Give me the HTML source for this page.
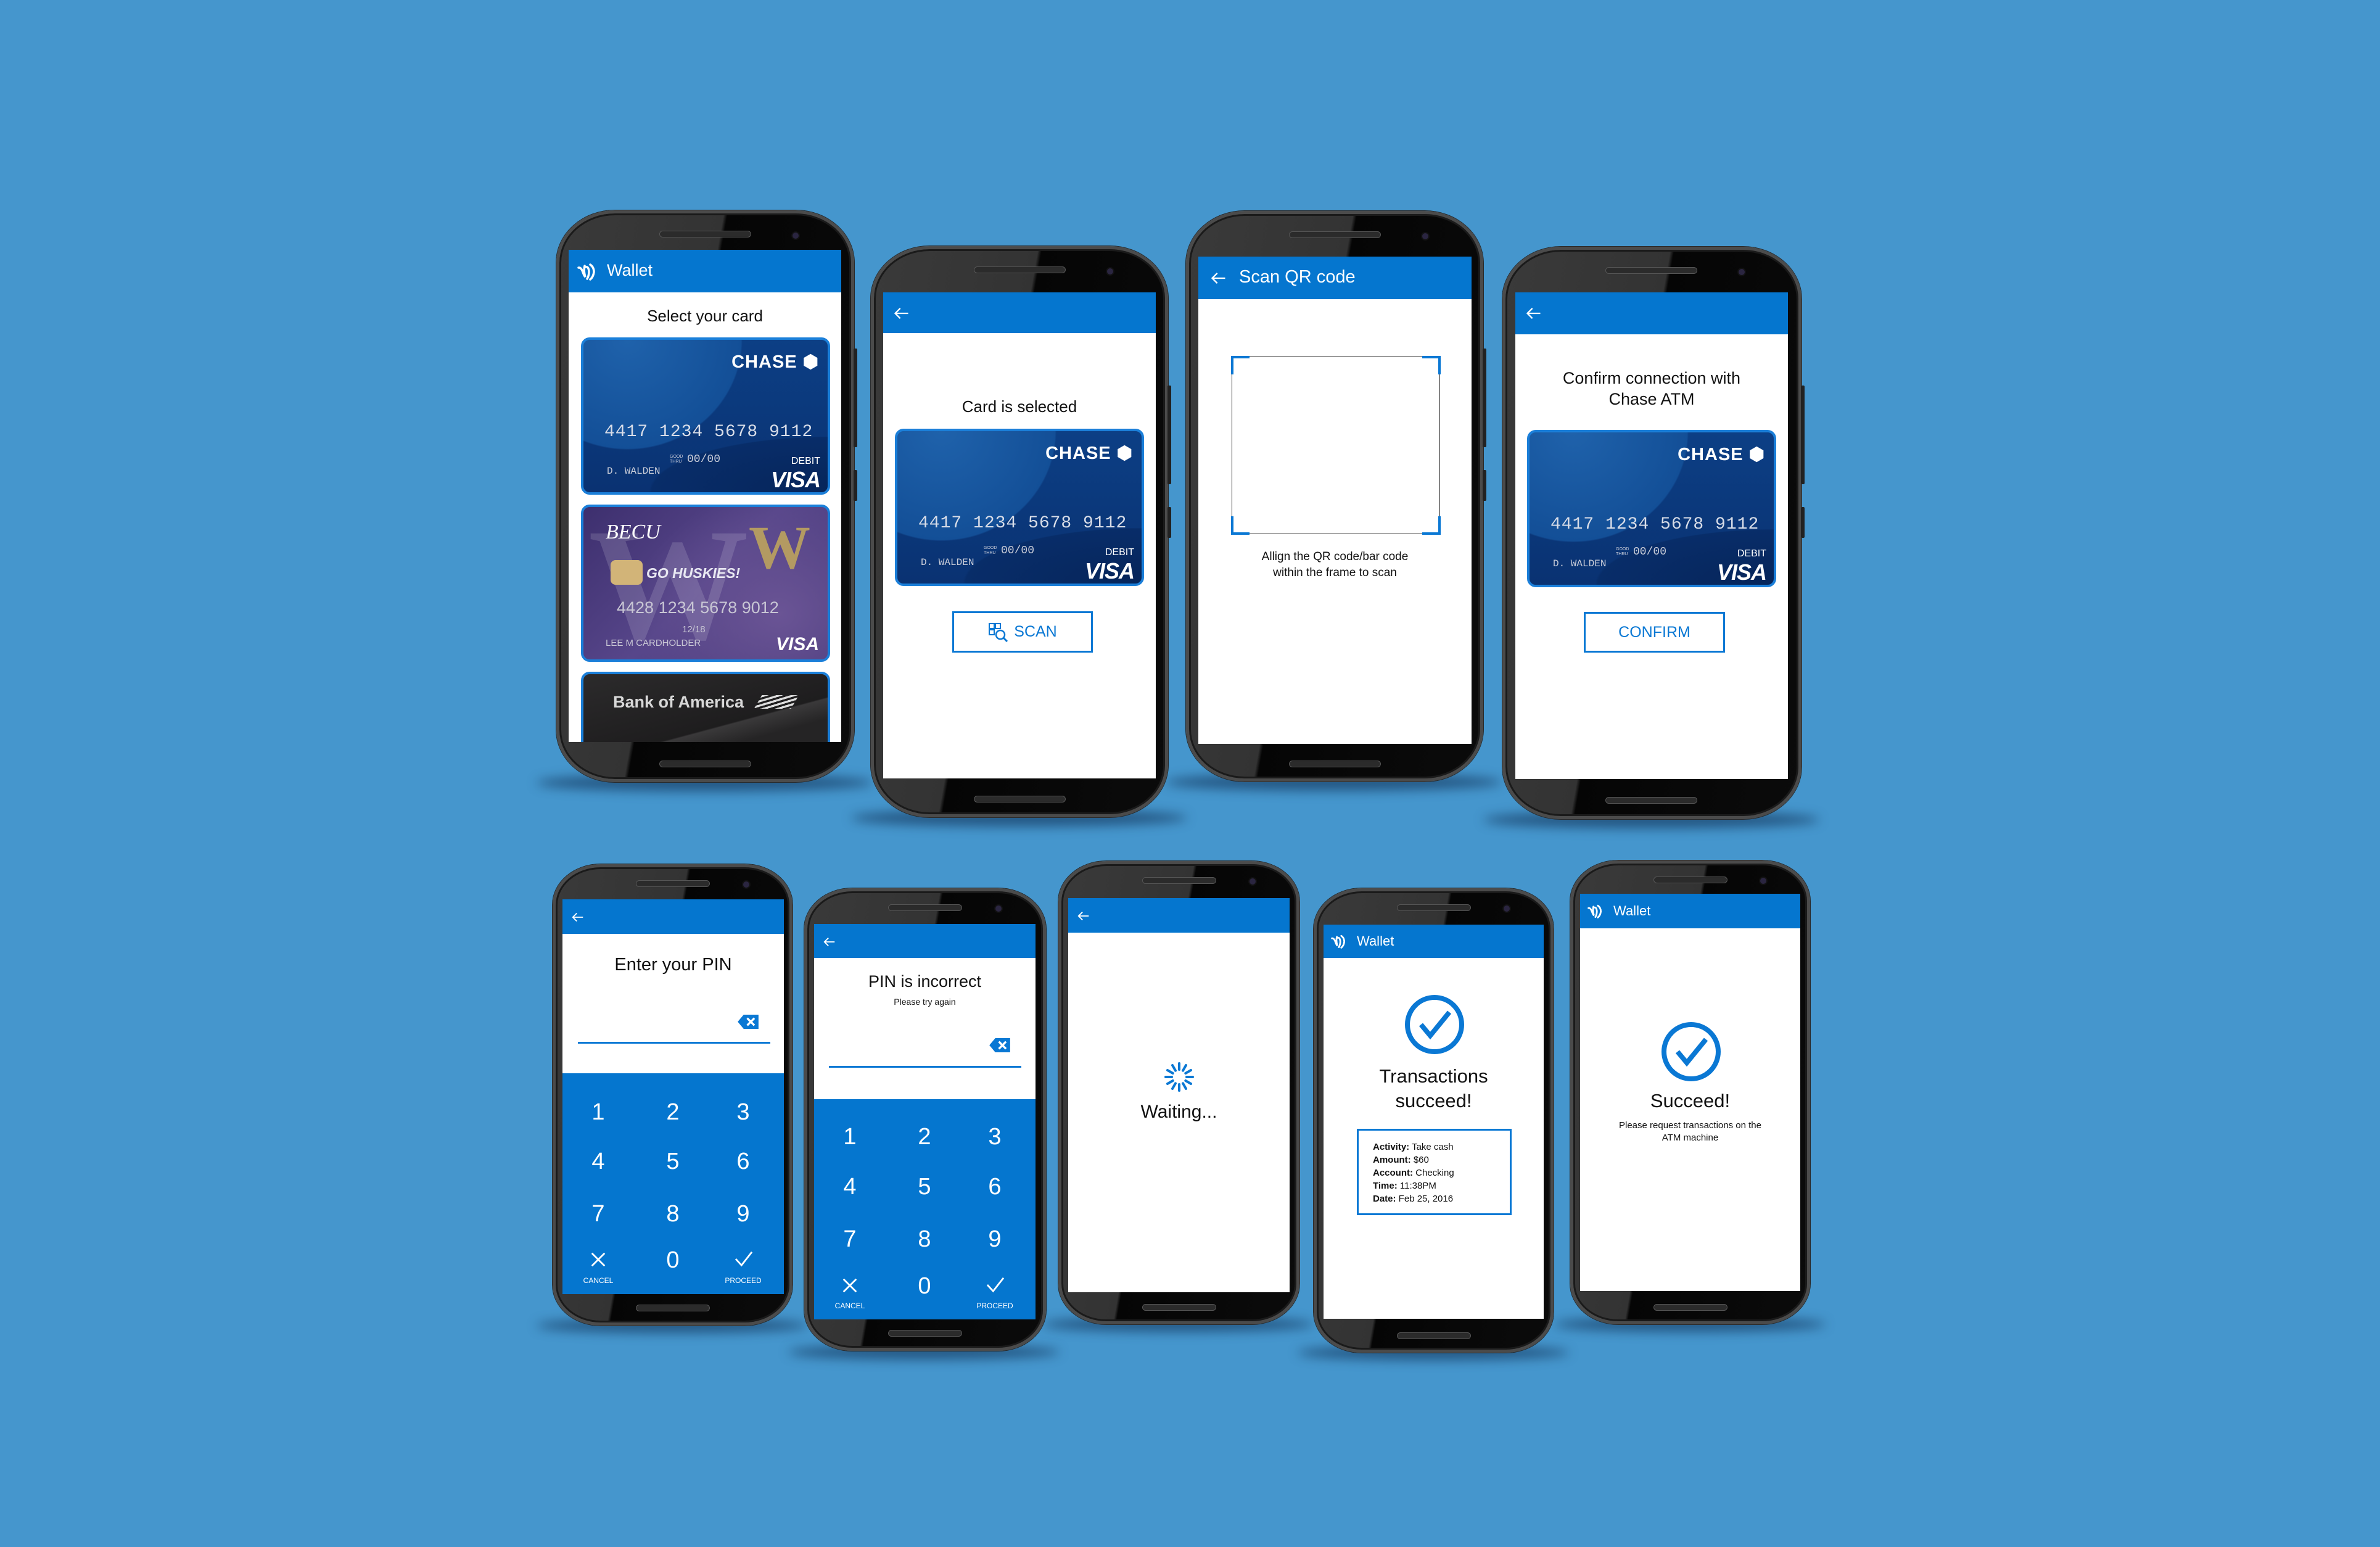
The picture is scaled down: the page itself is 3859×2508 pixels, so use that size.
<!DOCTYPE html>
<html><head><meta charset="utf-8">
<style>
*{margin:0;padding:0;box-sizing:border-box}
html,body{width:3859px;height:2508px;overflow:hidden;background:#4596cd;font-family:"Liberation Sans",sans-serif}
.ab{position:absolute}
.sh{position:absolute;background:rgba(10,35,70,.55);filter:blur(9px);border-radius:50%}
.bd{position:absolute;border-radius:95px/85px;border:5px solid #4b4b4b;
 background:linear-gradient(100deg,#3a3a3a 0%,#333 42%,#050505 43%,#0b0b0b 100%);
 box-shadow:inset 0 0 0 3px #1a1a1a, 0 0 0 1px #2a2a2a}
.sbd{border-radius:78px/66px}
.spk{position:absolute;height:11px;border-radius:6px;background:#2b2b2b;border:1px solid #555}
.cam{position:absolute;width:14px;height:14px;border-radius:50%;background:#2a2540;border:2px solid #111}
.btn{position:absolute;width:6px;background:#222;border-radius:2px}
.sc{position:absolute;background:#fff;overflow:hidden}
.bar{position:absolute;left:0;top:0;width:100%;background:#0576cf}
.nar{font-family:"Liberation Sans Narrow","Liberation Sans",sans-serif}
.t{position:absolute;left:0;width:100%;text-align:center;color:#111}
.card{position:absolute;width:404px;height:255px;border:4px solid #1b7fd9;border-radius:14px;overflow:hidden;
 background:radial-gradient(ellipse 62% 95% at 18% 0%,#1f62ab 0%,#134f97 75%,rgba(0,0,0,0) 76%),
 radial-gradient(ellipse 120% 60% at 100% 100%,#06255a 0%,#082d69 60%,rgba(0,0,0,0) 61%),
 linear-gradient(180deg,#0c3f85,#0a3272)}
.card .ch{position:absolute;right:14px;top:18px;color:#fff;font-weight:bold;font-size:29px;letter-spacing:1px}
.card .num{position:absolute;left:34px;top:134px;color:#d8dde8;font-family:"Liberation Mono",monospace;font-size:28px;letter-spacing:1px}
.card .nm{position:absolute;left:38px;top:204px;color:#c8ccd8;font-family:"Liberation Mono",monospace;font-size:16px}
.card .gt{position:absolute;left:140px;top:186px;color:#c8ccd8;font-size:7px;line-height:8px}
.card .ex{position:absolute;left:168px;top:184px;color:#c8ccd8;font-family:"Liberation Mono",monospace;font-size:18px}
.card .db{position:absolute;right:12px;top:188px;color:#fff;font-size:16px}
.card .vs{position:absolute;right:12px;top:206px;color:#fff;font-size:36px;font-weight:bold;font-style:italic;letter-spacing:-1px}
.obtn{position:absolute;width:228px;height:67px;border:3px solid #0a78d4;color:#0a78d4;font-size:25px;display:flex;align-items:center;justify-content:center}
.kp{position:absolute;left:0;width:100%;background:#0576cf}
.kp div{position:absolute;color:#fff;text-align:center;width:80px;margin-left:-40px;font-size:38px;line-height:40px}
.kp .lb{font-size:12px;line-height:12px}
.bx{position:absolute;font-size:15px;line-height:21px;color:#111}
</style></head><body>

<!-- shadows -->
<div class="sh" style="left:870px;top:1255px;width:545px;height:28px"></div>
<div class="sh" style="left:1380px;top:1312px;width:545px;height:28px"></div>
<div class="sh" style="left:1890px;top:1254px;width:545px;height:28px"></div>
<div class="sh" style="left:2405px;top:1315px;width:545px;height:28px"></div>
<div class="sh" style="left:870px;top:2137px;width:440px;height:24px"></div>
<div class="sh" style="left:1278px;top:2180px;width:440px;height:24px"></div>
<div class="sh" style="left:1690px;top:2135px;width:440px;height:24px"></div>
<div class="sh" style="left:2104px;top:2181px;width:440px;height:24px"></div>
<div class="sh" style="left:2520px;top:2135px;width:440px;height:24px"></div>

<!-- bodies -->
<div class="bd" style="left:902px;top:341px;width:483px;height:927px"></div>
<div class="bd" style="left:1412px;top:399px;width:482px;height:926px"></div>
<div class="bd" style="left:1923px;top:342px;width:482px;height:925px"></div>
<div class="bd" style="left:2436px;top:400px;width:485px;height:928px"></div>
<div class="bd sbd" style="left:896px;top:1401px;width:389px;height:748px"></div>
<div class="bd sbd" style="left:1304px;top:1440px;width:392px;height:750px"></div>
<div class="bd sbd" style="left:1716px;top:1396px;width:391px;height:751px"></div>
<div class="bd sbd" style="left:2130px;top:1440px;width:389px;height:753px"></div>
<div class="bd sbd" style="left:2546px;top:1395px;width:389px;height:752px"></div>

<!-- speakers / cams / bottom slots -->
<div class="spk" style="left:1069px;top:374px;width:149px"></div><div class="cam" style="left:1283px;top:375px"></div><div class="spk" style="left:1069px;top:1233px;width:149px"></div>
<div class="spk" style="left:1579px;top:432px;width:149px"></div><div class="cam" style="left:1793px;top:433px"></div><div class="spk" style="left:1579px;top:1290px;width:149px"></div>
<div class="spk" style="left:2090px;top:375px;width:149px"></div><div class="cam" style="left:2304px;top:376px"></div><div class="spk" style="left:2090px;top:1233px;width:149px"></div>
<div class="spk" style="left:2603px;top:433px;width:149px"></div><div class="cam" style="left:2817px;top:434px"></div><div class="spk" style="left:2603px;top:1292px;width:149px"></div>
<div class="spk" style="left:1031px;top:1427px;width:120px"></div><div class="cam" style="left:1203px;top:1427px"></div><div class="spk" style="left:1031px;top:2115px;width:120px"></div>
<div class="spk" style="left:1440px;top:1466px;width:120px"></div><div class="cam" style="left:1612px;top:1466px"></div><div class="spk" style="left:1440px;top:2156px;width:120px"></div>
<div class="spk" style="left:1852px;top:1422px;width:120px"></div><div class="cam" style="left:2024px;top:1422px"></div><div class="spk" style="left:1852px;top:2114px;width:120px"></div>
<div class="spk" style="left:2265px;top:1466px;width:120px"></div><div class="cam" style="left:2436px;top:1466px"></div><div class="spk" style="left:2265px;top:2160px;width:120px"></div>
<div class="spk" style="left:2681px;top:1421px;width:120px"></div><div class="cam" style="left:2852px;top:1421px"></div><div class="spk" style="left:2681px;top:2114px;width:120px"></div>

<!-- side buttons -->
<div class="btn" style="left:1384px;top:565px;height:160px"></div><div class="btn" style="left:1384px;top:762px;height:50px"></div>
<div class="btn" style="left:1893px;top:625px;height:160px"></div><div class="btn" style="left:1893px;top:822px;height:50px"></div>
<div class="btn" style="left:2404px;top:565px;height:160px"></div><div class="btn" style="left:2404px;top:762px;height:50px"></div>
<div class="btn" style="left:2920px;top:625px;height:160px"></div><div class="btn" style="left:2920px;top:822px;height:50px"></div>

<svg width="0" height="0" style="position:absolute">
 <defs>
  <symbol id="wl" viewBox="0 0 30 30"><path d="M2 9 Q6 8 9 16 Q11 22 13 24 Q10 14 12 6 M13 8 Q18 6 19 15 Q19 22 16 27 M21 4 Q27 8 27 16 Q26 24 21 28" fill="none" stroke="#fff" stroke-width="3.5" stroke-linecap="round"/></symbol>
  <symbol id="ar" viewBox="0 0 24 24"><path d="M21 12H4M10 5l-7 7 7 7" fill="none" stroke="#fff" stroke-width="2"/></symbol>
  <symbol id="bs" viewBox="0 0 38 26"><path d="M11 1H36V25H11L1 13Z" fill="#0a78d4"/><path d="M17 7l12 12M29 7L17 19" stroke="#fff" stroke-width="3.5"/></symbol>
  <symbol id="ck" viewBox="0 0 100 100"><circle cx="50" cy="50" r="44" fill="none" stroke="#0a78d4" stroke-width="8"/><path d="M28 50l15 18 31-38" fill="none" stroke="#0a78d4" stroke-width="8"/></symbol>
  <symbol id="cr" viewBox="0 0 30 30"><path d="M4 4l22 22M26 4L4 26" stroke="#fff" stroke-width="3"/></symbol>
  <symbol id="ok" viewBox="0 0 34 30"><path d="M3 15l10 11L31 3" fill="none" stroke="#fff" stroke-width="3"/></symbol>
 </defs>
</svg>

<!-- P1 -->
<div class="sc" style="left:922px;top:405px;width:442px;height:798px">
 <div class="bar" style="height:69px"></div>
 <svg class="ab" style="left:14px;top:20px" width="30" height="30"><use href="#wl"/></svg>
 <div class="ab nar" style="left:62px;top:18px;color:#fff;font-size:27px">Wallet</div>
 <div class="t" style="top:92px;font-size:26px">Select your card</div>
 <div class="card" style="left:20px;top:142px">
  <div class="ch">CHASE ⬢</div><div class="num">4417 1234 5678 9112</div>
  <div class="gt">GOOD<br>THRU</div><div class="ex">00/00</div><div class="nm">D. WALDEN</div>
  <div class="db">DEBIT</div><div class="vs">VISA</div></div>
 <div class="card" style="left:20px;top:413px;background:radial-gradient(ellipse 60% 80% at 80% 70%,#6a5495,transparent),linear-gradient(135deg,#3d2f6e,#57468a 50%,#463878)">
  <div class="ab" style="left:8px;top:6px;color:rgba(255,255,255,.14);font-size:260px;font-weight:bold;line-height:240px;font-family:'Liberation Serif',serif">W</div>
  <div class="ab" style="left:36px;top:22px;color:#fff;font-size:34px;font-family:'Liberation Serif',serif;font-style:italic">BECU</div>
  <div class="ab" style="left:268px;top:16px;color:#b39a62;font-size:100px;font-weight:bold;line-height:100px;font-family:'Liberation Serif',serif">W</div>
  <div class="ab" style="left:44px;top:86px;width:52px;height:40px;border-radius:8px;background:#d2b478"></div>
  <div class="ab" style="left:102px;top:94px;color:#e8e8f2;font-size:23px;font-weight:bold;font-style:italic">GO HUSKIES!</div>
  <div class="ab" style="left:54px;top:148px;color:#c8c6d4;font-size:27px">4428 1234 5678 9012</div>
  <div class="ab" style="left:160px;top:190px;color:#c8c6d4;font-size:15px">12/18</div>
  <div class="ab" style="left:36px;top:212px;color:#c8c6d4;font-size:15px">LEE M CARDHOLDER</div>
  <div class="ab" style="right:14px;top:206px;color:#fff;font-size:30px;font-weight:bold;font-style:italic">VISA</div></div>
 <div class="card" style="left:20px;top:684px;height:140px;background:linear-gradient(165deg,#2c2b2c 0%,#1e1d1e 60%,#3a393a 61%,#252425 75%)">
  <div class="ab nar" style="left:48px;top:30px;color:#d8d8d8;font-size:27px;font-weight:bold">Bank of America</div>
  <div class="ab" style="left:283px;top:34px;width:60px;height:22px;background:repeating-linear-gradient(160deg,#ddd 0 4px,transparent 4px 8px);transform:skewX(-30deg)"></div></div>
</div>

<!-- P2 -->
<div class="sc" style="left:1432px;top:474px;width:442px;height:788px">
 <div class="bar" style="height:66px"></div>
 <svg class="ab" style="left:16px;top:20px" width="28" height="28"><use href="#ar"/></svg>
 <div class="t" style="top:170px;font-size:26px">Card is selected</div>
 <div class="card" style="left:19px;top:221px">
  <div class="ch">CHASE ⬢</div><div class="num">4417 1234 5678 9112</div>
  <div class="gt">GOOD<br>THRU</div><div class="ex">00/00</div><div class="nm">D. WALDEN</div>
  <div class="db">DEBIT</div><div class="vs">VISA</div></div>
 <div class="obtn nar" style="left:112px;top:517px"><svg width="32" height="32" viewBox="0 0 32 32" style="margin-right:10px"><path d="M2 2h8v8H2zM12 2h8v8h-8zM2 12h8v8H2z" fill="none" stroke="#0a78d4" stroke-width="2"/><circle cx="20" cy="20" r="7" fill="none" stroke="#0a78d4" stroke-width="2.5"/><path d="M25 25l6 6" stroke="#0a78d4" stroke-width="3"/></svg>SCAN</div>
</div>

<!-- P3 -->
<div class="sc" style="left:1943px;top:416px;width:443px;height:790px">
 <div class="bar" style="height:69px"></div>
 <svg class="ab" style="left:18px;top:21px" width="30" height="28"><use href="#ar"/></svg>
 <div class="ab nar" style="left:66px;top:17px;color:#fff;font-size:29px">Scan QR code</div>
 <div class="ab" style="left:54px;top:162px;width:338px;height:288px;border:1px solid #222"></div>
 <div class="ab" style="left:53px;top:161px;width:30px;height:30px;border-left:4px solid #0a78d4;border-top:4px solid #0a78d4"></div>
 <div class="ab" style="left:363px;top:161px;width:30px;height:30px;border-right:4px solid #0a78d4;border-top:4px solid #0a78d4"></div>
 <div class="ab" style="left:53px;top:421px;width:30px;height:30px;border-left:4px solid #0a78d4;border-bottom:4px solid #0a78d4"></div>
 <div class="ab" style="left:363px;top:421px;width:30px;height:30px;border-right:4px solid #0a78d4;border-bottom:4px solid #0a78d4"></div>
 <div class="t" style="top:474px;font-size:19px;line-height:26px">Allign the QR code/bar code<br>within the frame to scan</div>
</div>

<!-- P4 -->
<div class="sc" style="left:2457px;top:474px;width:442px;height:789px">
 <div class="bar" style="height:68px"></div>
 <svg class="ab" style="left:16px;top:20px" width="28" height="28"><use href="#ar"/></svg>
 <div class="t" style="top:122px;font-size:27px;line-height:34px">Confirm connection with<br>Chase ATM</div>
 <div class="card" style="left:19px;top:223px">
  <div class="ch">CHASE ⬢</div><div class="num">4417 1234 5678 9112</div>
  <div class="gt">GOOD<br>THRU</div><div class="ex">00/00</div><div class="nm">D. WALDEN</div>
  <div class="db">DEBIT</div><div class="vs">VISA</div></div>
 <div class="obtn nar" style="left:111px;top:518px;height:66px;width:229px">CONFIRM</div>
</div>

<!-- P5 -->
<div class="sc" style="left:912px;top:1458px;width:359px;height:640px">
 <div class="bar" style="height:56px"></div>
 <svg class="ab" style="left:14px;top:18px" width="22" height="22"><use href="#ar"/></svg>
 <div class="t" style="top:90px;font-size:29px">Enter your PIN</div>
 <svg class="ab" style="left:283px;top:186px" width="37" height="25"><use href="#bs"/></svg>
 <div class="ab" style="left:25px;top:231px;width:312px;height:3px;background:#0a78d4"></div>
 <div class="kp nar" style="top:282px;height:358px">
  <div style="left:58px;top:43px">1</div><div style="left:179px;top:43px">2</div><div style="left:293px;top:43px">3</div>
  <div style="left:58px;top:123px">4</div><div style="left:179px;top:123px">5</div><div style="left:293px;top:123px">6</div>
  <div style="left:58px;top:208px">7</div><div style="left:179px;top:208px">8</div><div style="left:293px;top:208px">9</div>
  <div style="left:179px;top:283px">0</div>
  <svg class="ab" style="left:44px;top:288px" width="28" height="28"><use href="#cr"/></svg>
  <svg class="ab" style="left:278px;top:287px" width="32" height="28"><use href="#ok"/></svg>
  <div class="lb" style="left:58px;top:330px">CANCEL</div><div class="lb" style="left:293px;top:330px">PROCEED</div>
 </div>
</div>

<!-- P6 -->
<div class="sc" style="left:1320px;top:1498px;width:359px;height:641px">
 <div class="bar" style="height:55px"></div>
 <svg class="ab" style="left:14px;top:18px" width="22" height="22"><use href="#ar"/></svg>
 <div class="t" style="top:78px;font-size:27px">PIN is incorrect</div>
 <div class="t" style="top:118px;font-size:14px">Please try again</div>
 <svg class="ab" style="left:283px;top:184px" width="37" height="25"><use href="#bs"/></svg>
 <div class="ab" style="left:24px;top:230px;width:312px;height:3px;background:#0a78d4"></div>
 <div class="kp nar" style="top:284px;height:357px">
  <div style="left:58px;top:41px">1</div><div style="left:179px;top:41px">2</div><div style="left:293px;top:41px">3</div>
  <div style="left:58px;top:122px">4</div><div style="left:179px;top:122px">5</div><div style="left:293px;top:122px">6</div>
  <div style="left:58px;top:207px">7</div><div style="left:179px;top:207px">8</div><div style="left:293px;top:207px">9</div>
  <div style="left:179px;top:283px">0</div>
  <svg class="ab" style="left:44px;top:288px" width="28" height="28"><use href="#cr"/></svg>
  <svg class="ab" style="left:278px;top:287px" width="32" height="28"><use href="#ok"/></svg>
  <div class="lb" style="left:58px;top:329px">CANCEL</div><div class="lb" style="left:293px;top:329px">PROCEED</div>
 </div>
</div>

<!-- P7 -->
<div class="sc" style="left:1732px;top:1456px;width:359px;height:639px">
 <div class="bar" style="height:56px"></div>
 <svg class="ab" style="left:14px;top:18px" width="22" height="22"><use href="#ar"/></svg>
 <svg class="ab" style="left:156px;top:266px" width="48" height="48" viewBox="-24 -24 48 48">
  <g stroke="#0a78d4" stroke-width="4" stroke-linecap="round">
   <path d="M0-22v10"/><path d="M0 12v10"/><path d="M-22 0h10"/><path d="M12 0h10"/>
   <path d="M11-19l-5 8.7"/><path d="M-11 19l5-8.7"/><path d="M19-11l-8.7 5"/><path d="M-19 11l8.7-5"/>
   <path d="M-11-19l5 8.7"/><path d="M11 19l-5-8.7"/><path d="M-19-11l8.7 5"/><path d="M19 11l-8.7-5"/>
  </g></svg>
 <div class="t" style="top:330px;font-size:30px">Waiting...</div>
</div>

<!-- P8 -->
<div class="sc" style="left:2146px;top:1499px;width:357px;height:639px">
 <div class="bar" style="height:54px"></div>
 <svg class="ab" style="left:12px;top:14px" width="24" height="26"><use href="#wl"/></svg>
 <div class="ab nar" style="left:54px;top:14px;color:#fff;font-size:22px">Wallet</div>
 <svg class="ab" style="left:130px;top:112px" width="100" height="100"><use href="#ck"/></svg>
 <div class="t" style="top:226px;font-size:31px;line-height:40px">Transactions<br>succeed!</div>
 <div class="ab" style="left:54px;top:331px;width:251px;height:140px;border:3px solid #0a78d4"></div>
 <div class="bx" style="left:80px;top:350px"><b>Activity:</b> Take cash<br><b>Amount:</b> $60<br><b>Account:</b> Checking<br><b>Time:</b> 11:38PM<br><b>Date:</b> Feb 25, 2016</div>
</div>

<!-- P9 -->
<div class="sc" style="left:2562px;top:1449px;width:357px;height:644px">
 <div class="bar" style="height:56px"></div>
 <svg class="ab" style="left:12px;top:15px" width="24" height="26"><use href="#wl"/></svg>
 <div class="ab nar" style="left:54px;top:15px;color:#fff;font-size:22px">Wallet</div>
 <svg class="ab" style="left:130px;top:206px" width="100" height="100"><use href="#ck"/></svg>
 <div class="t" style="top:318px;font-size:31px">Succeed!</div>
 <div class="t" style="top:366px;font-size:15px;line-height:20px">Please request transactions on the<br>ATM machine</div>
</div>

</body></html>
